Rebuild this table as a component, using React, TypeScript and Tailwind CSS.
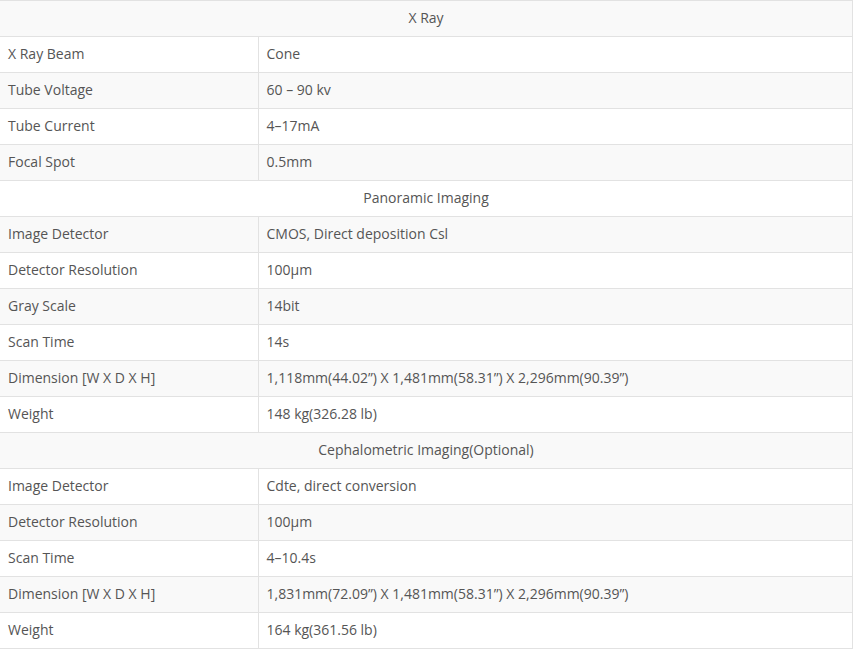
type Row = { label: string; value?: string };

const sections: { title: string; rows: Row[] }[] = [
  {
    title: "X Ray",
    rows: [
      { label: "X Ray Beam", value: "Cone" },
      { label: "Tube Voltage", value: "60 – 90 kv" },
      { label: "Tube Current", value: "4–17mA" },
      { label: "Focal Spot", value: "0.5mm" },
    ],
  },
  {
    title: "Panoramic Imaging",
    rows: [
      { label: "Image Detector", value: "CMOS, Direct deposition Csl" },
      { label: "Detector Resolution", value: "100μm" },
      { label: "Gray Scale", value: "14bit" },
      { label: "Scan Time", value: "14s" },
      {
        label: "Dimension [W X D X H]",
        value: "1,118mm(44.02”) X 1,481mm(58.31”) X 2,296mm(90.39”)",
      },
      { label: "Weight", value: "148 kg(326.28 lb)" },
    ],
  },
  {
    title: "Cephalometric Imaging(Optional)",
    rows: [
      { label: "Image Detector", value: "Cdte, direct conversion" },
      { label: "Detector Resolution", value: "100μm" },
      { label: "Scan Time", value: "4–10.4s" },
      {
        label: "Dimension [W X D X H]",
        value: "1,831mm(72.09”) X 1,481mm(58.31”) X 2,296mm(90.39”)",
      },
      { label: "Weight", value: "164 kg(361.56 lb)" },
    ],
  },
];

export default function App() {
  // flatten so stripes run across section headers too
  const rows: { title?: string; label?: string; value?: string }[] = [];
  sections.forEach((s) => {
    rows.push({ title: s.title });
    s.rows.forEach((r) => rows.push(r));
  });

  return (
    <div className="w-[855px] h-[650px] bg-white font-['Open_Sans',sans-serif] text-[14px] text-[#555]">
      <table className="w-[853px] border-collapse table-fixed">
        <colgroup>
          <col className="w-[258px]" />
          <col />
        </colgroup>
        <tbody>
          {rows.map((r, i) => (
            <tr key={i} className={i % 2 === 0 ? "bg-[#f9f9f9]" : "bg-white"}>
              {r.title ? (
                <td
                  colSpan={2}
                  className="h-[36px] border border-[#e2e2e2] border-l-0 text-center p-0 pb-[2px] leading-[20px]"
                >
                  {r.title}
                </td>
              ) : (
                <>
                  <td className="h-[36px] border border-[#e2e2e2] border-l-0 p-0 pl-2 pb-[2px] leading-[20px]">
                    {r.label}
                  </td>
                  <td className="h-[36px] border border-[#e2e2e2] p-0 pl-2 pb-[2px] leading-[20px]">
                    {r.value}
                  </td>
                </>
              )}
            </tr>
          ))}
        </tbody>
      </table>
    </div>
  );
}
